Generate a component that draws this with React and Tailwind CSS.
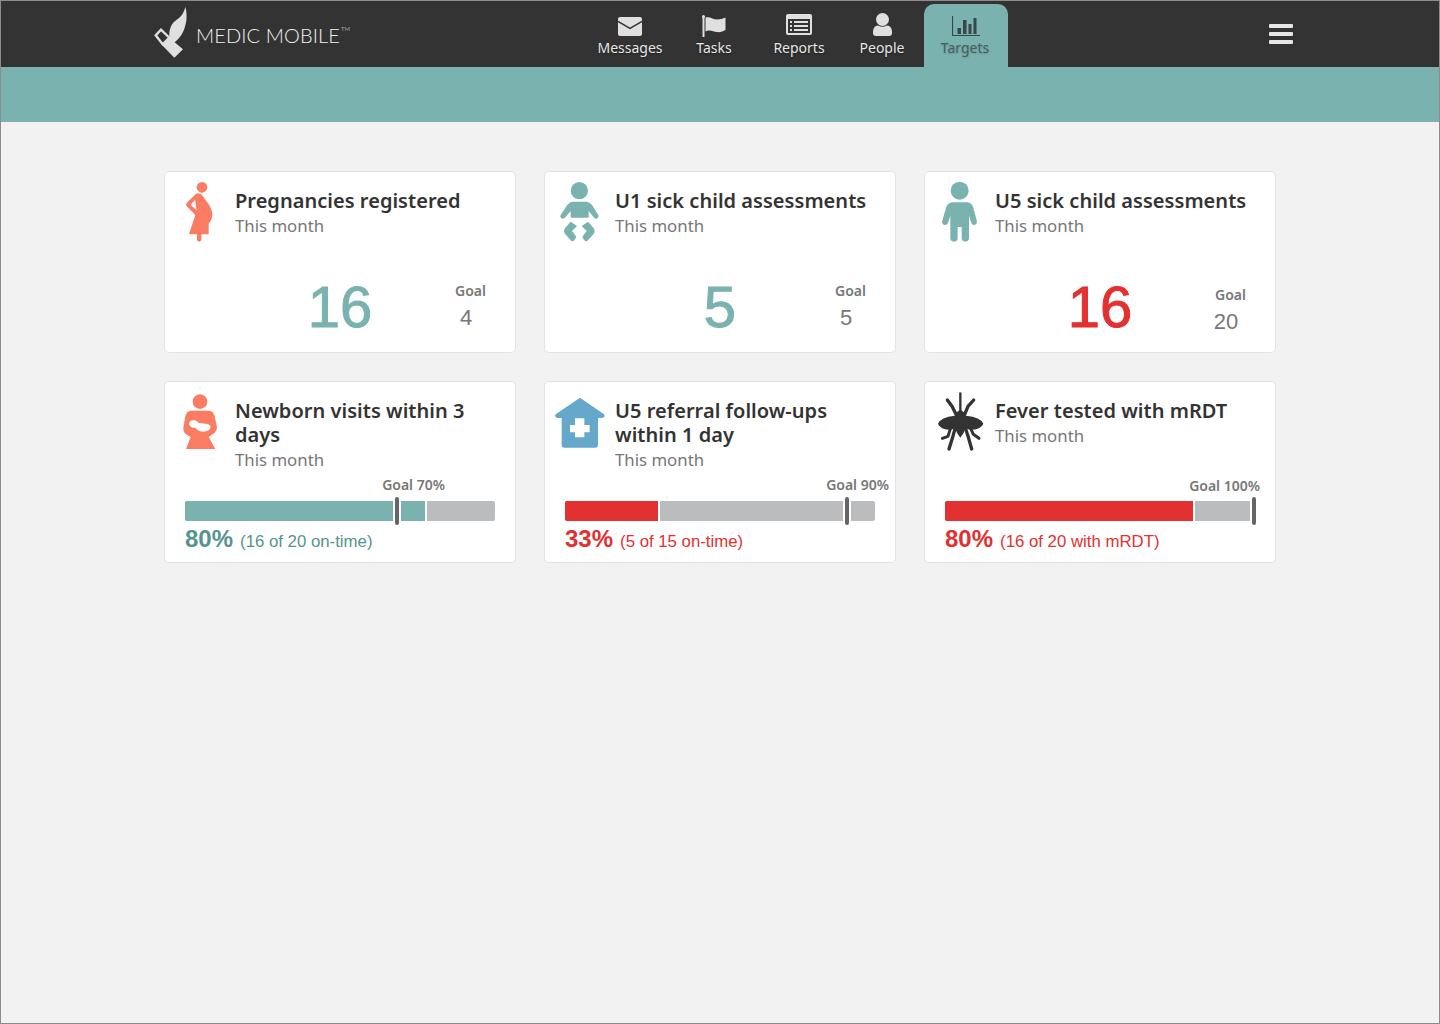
import React from 'react';

const SANS = 'font-["Noto_Sans","Open_Sans",sans-serif]';

function Svg({ children, w = 50, h = 64, vb = '45 45 150 192', className = '' }) {
  return (
    <svg width={w} height={h} viewBox={vb} className={`block ${className}`}>
      {children}
    </svg>
  );
}

const Pregnant = () => (
  <Svg>
    <circle cx="126" cy="67" r="16" fill="#f97c63" />
    <path fill="#f97c63" d="M108 86 Q118 82 126 90 L146 118 Q158 136 157 152 Q156 166 146 176 L146 208 L124 208 L124 226 Q118 234 111 226 L111 208 L87 208 L106 150 L80 124 Q76 119 80 114 Z" />
    <path fill="#fff" d="M92 120 L105 104 L110 136 Z" />
  </Svg>
);
const Baby = () => (
  <Svg>
    <circle cx="118" cy="77" r="26" fill="#7ab2b0" />
    <path fill="#7ab2b0" d="M95 110 H141 Q150 112 156 120 L175 150 Q177 158 170 161 Q165 162 161 157 L146 138 V158 H92 V138 L75 158 Q70 163 64 160 Q58 156 62 150 L82 120 Q88 112 95 110 Z" />
    <path fill="#7ab2b0" d="M92 170 L111 183 L96 198 L108 214 Q109 220 104 224 Q98 232 92 226 L76 208 Q68 198 76 188 Z" />
    <path fill="#7ab2b0" d="M144 170 L125 183 L140 198 L128 214 Q127 220 132 224 Q138 232 144 226 L160 208 Q168 198 160 188 Z" />
  </Svg>
);
const Child = () => (
  <Svg>
    <circle cx="119" cy="77" r="27" fill="#7ab2b0" />
    <path fill="#7ab2b0" d="M98 112 H142 Q156 114 160 128 L171 170 Q171 178 163 180 Q156 180 154 174 L147 152 V220 Q146 230 136 230 Q126 230 125 220 V186 H113 V220 Q112 230 102 230 Q92 230 91 220 V152 L84 174 Q82 180 75 180 Q66 178 66 170 L78 128 Q82 114 98 112 Z" />
  </Svg>
);
const Newborn = () => (
  <Svg>
    <circle cx="120" cy="80" r="22" fill="#f97c63" />
    <path fill="#f97c63" d="M92 107 H148 Q160 108 164 124 L171 156 Q171 168 160 176 L146 186 L166 222 H78 L92 186 L78 178 Q69 170 70 158 L76 124 Q80 108 92 107 Z" />
    <path fill="#fff" d="M87 146 Q90 134 104 136 Q112 138 116 144 L138 146 Q152 148 152 156 Q150 168 132 170 Q114 170 106 158 Q90 160 87 146 Z" />
  </Svg>
);
const House = () => (
  <Svg>
    <path fill="#65a8cb" d="M120 68 L192 118 Q197 128 186 129 H174 V210 Q174 218 166 218 H73 Q65 218 65 210 V129 H53 Q42 128 47 118 Z" />
    <path fill="#fff" d="M105 130 H133 V150 H149 V172 H133 V187 H105 V172 H90 V150 H105 Z" />
  </Svg>
);
const Mosquito = () => (
  <Svg>
    <g fill="none" stroke="#333" strokeLinecap="round" strokeLinejoin="round">
      <path strokeWidth="7" d="M121 55 V105" />
      <path strokeWidth="10" d="M108 118 L96 94 L82 75" />
      <path strokeWidth="10" d="M134 118 L144 94 L161 75" />
      <path strokeWidth="9" d="M94 152 L84 184 L67 190" />
      <path strokeWidth="9" d="M148 152 L160 178 L177 190" />
      <path strokeWidth="10" d="M106 158 L97 190 L87 222" />
      <path strokeWidth="10" d="M136 158 L146 190 L155 222" />
    </g>
    <path fill="#333" d="M54 146 Q62 126 104 122 Q110 108 121 104 Q132 108 138 122 Q182 126 190 146 Q184 164 150 164 Q142 162 137 158 Q132 176 121 188 Q110 176 105 158 Q100 162 92 164 Q60 164 54 146 Z" />
  </Svg>
);

function Title({ children }) {
  return <div className="text-[20px] leading-6 font-semibold tracking-[0.03px] text-[#333]">{children}</div>;
}

function CardHead({ icon, title }) {
  return (
    <div className="flex gap-[10px] pl-[10px] pt-2">
      <div className="w-[50px] shrink-0">{icon}</div>
      <div className="pt-[9px] pr-2">
        <Title>{title}</Title>
        <div className="text-[16.8px] leading-6 text-[#777] mt-px">This month</div>
      </div>
    </div>
  );
}

function CountCard({ icon, title, value, goal, color, low }) {
  return (
    <div className={`h-[182px] bg-white border border-[#e3e3e3] rounded-[5px] flex flex-col ${SANS}`}>
      <CardHead icon={icon} title={title} />
      <div className="grid grid-cols-[1fr_auto_1fr] items-center mt-auto mb-[12px]">
        <div />
        <div className={`font-['Liberation_Sans',sans-serif] text-[58px] leading-[66px] [-webkit-text-stroke:1px_currentColor] ${color}`}>{value}</div>
        <div className={`flex justify-end pr-[29px] ${low ? 'pt-2' : ''}`}>
          <div className="w-[31px] flex flex-col items-center mb-[3px]">
            <div className="text-[14px] leading-[19px] font-semibold text-[#777]">Goal</div>
            <div className="font-['Liberation_Sans',sans-serif] text-[22px] leading-[26px] mt-[5px] text-[#777] mr-[9px]">{goal}</div>
          </div>
        </div>
      </div>
    </div>
  );
}

function BarCard({ icon, title, fill, goalAt, goalLabel, labelRight, fillColor, pct, detail, textColor, labelLow }) {
  return (
    <div className={`h-[182px] bg-white border border-[#e3e3e3] rounded-[5px] flex flex-col ${SANS}`}>
      <CardHead icon={icon} title={title} />
      <div className="mt-auto px-5 pb-[6px]">
        <div className="relative h-5 bg-[#bbbcbe] rounded-[2px]">
          <div className={`h-full rounded-l-[2px] border-r-2 border-white ${fillColor}`} style={{ width: fill }} />
          <div className="absolute top-0 h-5 w-2 bg-white" style={{ left: goalAt - 2 }} />
          <div className="absolute -top-1 h-7 w-1 rounded-[2px] bg-[#666]" style={{ left: goalAt }} />
          <div
            className={`absolute text-[14px] leading-[19px] font-semibold text-[#777] whitespace-nowrap ${labelLow ? '-top-[25px]' : '-top-[26px]'}`}
            style={{ right: labelRight }}
          >
            {goalLabel}
          </div>
        </div>
        <div className={`flex items-baseline gap-[7px] mt-[4px] font-['Liberation_Sans',sans-serif] ${textColor}`}>
          <span className="text-[24px] leading-7 font-bold">{pct}</span>
          <span className="text-[16.8px] leading-7">{detail}</span>
        </div>
      </div>
    </div>
  );
}

const Envelope = () => (
  <svg width="24" height="19" viewBox="0 0 24 19" className="block mt-[2px]">
    <rect width="24" height="19" rx="2" fill="#e0e0e0" />
    <path d="M0 4.5 L12 11.5 L24 4.5" fill="none" stroke="#333" strokeWidth="1.5" />
  </svg>
);
const Flag = () => (
  <svg width="24" height="22" viewBox="0 0 24 22" className="block">
    <circle cx="1.5" cy="1.5" r="1.5" fill="#e0e0e0" />
    <rect x="0.5" y="1" width="2" height="21" fill="#e0e0e0" />
    <path fill="#e0e0e0" d="M3.5 2.5 C8 1 11 4.5 15 4.5 C18 4.5 21 3.5 23.5 2.5 V15 C21 16.5 18 17.5 15 17 C11 16.5 8 14 3.5 16.5 Z" />
  </svg>
);
const Report = () => (
  <svg width="26" height="21" viewBox="0 0 26 21" className="block mb-[3px] ml-[2px]">
    <rect width="26" height="21" rx="2" fill="#e0e0e0" />
    <rect x="2" y="5" width="22" height="14" fill="#333" />
    <g fill="#e0e0e0">
      <rect x="4" y="7" width="2" height="2" /><rect x="8" y="7" width="14" height="2" />
      <rect x="4" y="11" width="2" height="2" /><rect x="8" y="11" width="14" height="2" />
      <rect x="4" y="15" width="2" height="2" /><rect x="8" y="15" width="14" height="2" />
    </g>
  </svg>
);
const Person = () => (
  <svg width="19" height="23" viewBox="0 0 19 23" className="block mb-[2px]">
    <circle cx="9.5" cy="6.5" r="6.5" fill="#e0e0e0" />
    <path fill="#e0e0e0" d="M0 19 Q0 13 5 12.5 Q9.5 15 14 12.5 Q19 13 19 19 V20 Q19 23 16 23 H3 Q0 23 0 20 Z" />
  </svg>
);
const Chart = () => (
  <svg width="28" height="21" viewBox="0 0 28 21" className="block mt-px">
    <path d="M0.5 0 V19.5 H28" fill="none" stroke="#37474a" strokeWidth="1.2" />
    <g fill="#37474a">
      <rect x="5.5" y="12" width="3.5" height="6" />
      <rect x="11" y="4" width="3.5" height="14" />
      <rect x="16.5" y="8" width="3" height="10" />
      <rect x="21.5" y="2" width="3" height="16" />
    </g>
  </svg>
);

function NavTab({ icon, label, active, shift }) {
  return (
    <div
      className={`w-[84px] h-[63px] flex flex-col items-center rounded-t-[10px] ${active ? 'bg-[#7ab2b0] text-[#4a5e5e]' : 'text-[#e6e6e6]'}`}
    >
      <div className="h-[25px] mt-[9px] flex items-center justify-center">{icon}</div>
      <div className={`text-[14px] leading-[19px] ${shift ? 'ml-[2px]' : ''} ${active ? 'mr-[2px] [text-shadow:0_1px_2px_rgba(0,0,0,0.2)]' : '[text-shadow:0_1px_2px_rgba(0,0,0,0.45)]'}`}>{label}</div>
    </div>
  );
}

const Logo = () => (
  <svg width="34" height="54" viewBox="10 10 102 162" className="block shrink-0 mb-[5px]">
    <path fill="#e0e0e0" d="M104 15 C110 38 109 60 100 84 C94 100 84 112 72 122 L97 143 L71 168 L34 130 L56 108 C54 84 62 64 78 54 C90 46 100 34 104 15 Z" />
    <path fill="none" stroke="#e0e0e0" strokeWidth="7" d="M15 101 L31 84 L56 108 L36 128 Z" />
  </svg>
);

export default function App() {
  return (
    <div className={`w-[1440px] h-[1024px] border border-[#8c8c8c] bg-[#f2f2f2] ${SANS}`}>
      <header className="h-[66px] bg-[#333] flex items-end">
        <div className="w-[434px] ml-[153px] self-center flex items-center">
          <Logo />
          <div className="font-['Lato',sans-serif] font-light text-[20px] leading-none tracking-[0.1px] text-[#f0f0f0] ml-[8px] mt-px flex items-start">
            MEDIC MOBILE
            <span className="text-[6px] leading-[8px] ml-[1px]">TM</span>
          </div>
        </div>
        <nav className="flex">
          <NavTab icon={<Envelope />} label="Messages" />
          <NavTab icon={<Flag />} label="Tasks" />
          <NavTab icon={<Report />} label="Reports" shift />
          <NavTab icon={<Person />} label="People" />
          <NavTab icon={<Chart />} label="Targets" active />
        </nav>
        <div className="ml-auto mr-[146px] self-center flex flex-col gap-1 w-6">
          <div className="h-1 rounded-[1px] bg-[#e6e6e6]" />
          <div className="h-1 rounded-[1px] bg-[#e6e6e6]" />
          <div className="h-1 rounded-[1px] bg-[#e6e6e6]" />
        </div>
      </header>
      <div className="h-[55px] bg-[#7ab2b0]" />
      <main className="w-[1112px] mx-auto mt-[49px] grid grid-cols-3 gap-7">
        <CountCard icon={<Pregnant />} title="Pregnancies registered" value="16" goal="4" color="text-[#7ab2b0]" />
        <CountCard icon={<Baby />} title="U1 sick child assessments" value="5" goal="5" color="text-[#7ab2b0]" />
        <CountCard icon={<Child />} title="U5 sick child assessments" value="16" goal="20" color="text-[#e33030]" low />
        <BarCard icon={<Newborn />} title="Newborn visits within 3 days" fill={242} goalAt={210} goalLabel="Goal 70%" labelRight={50} fillColor="bg-[#7ab2b0]" pct="80%" detail="(16 of 20 on-time)" textColor="text-[#559390]" />
        <BarCard icon={<House />} title="U5 referral follow-ups within 1 day" fill={95} goalAt={280} goalLabel="Goal 90%" labelRight={-14} fillColor="bg-[#e33030]" pct="33%" detail="(5 of 15 on-time)" textColor="text-[#e33030]" />
        <BarCard icon={<Mosquito />} title="Fever tested with mRDT" fill={250} goalAt={307} goalLabel="Goal 100%" labelRight={-5} fillColor="bg-[#e33030]" pct="80%" detail="(16 of 20 with mRDT)" textColor="text-[#e33030]" labelLow />
      </main>
    </div>
  );
}
